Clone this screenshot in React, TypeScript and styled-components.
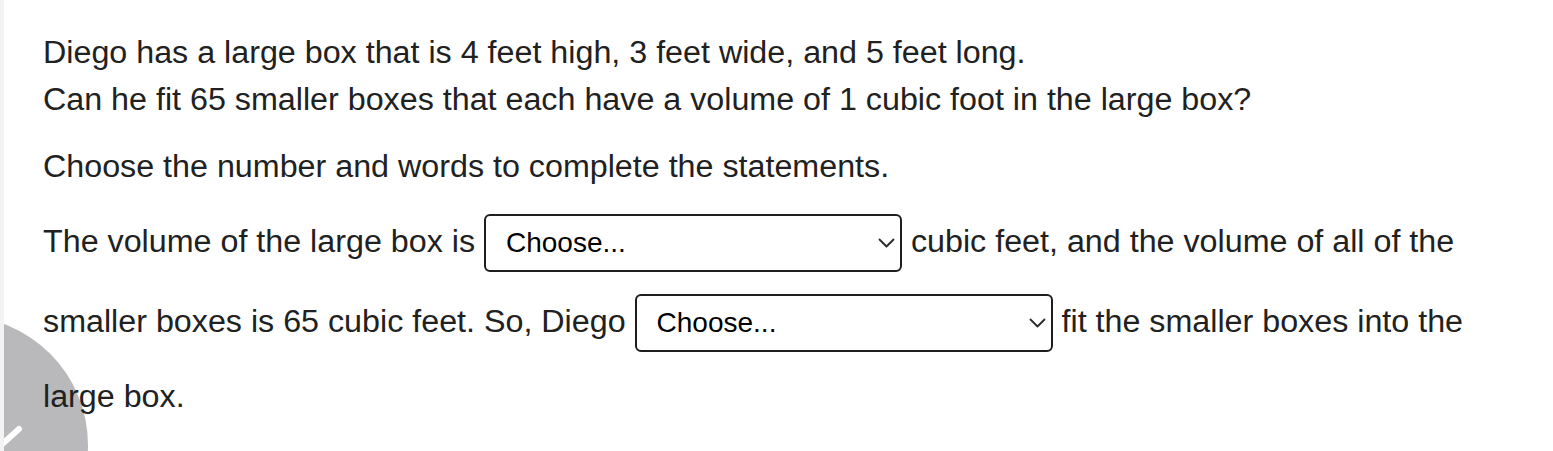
import React from "react";
import styled, { createGlobalStyle } from "styled-components";

const GlobalStyle = createGlobalStyle`
  html, body {
    margin: 0;
    padding: 0;
    background: #ffffff;
  }
  body {
    font-family: "Liberation Sans", Arial, Helvetica, sans-serif;
    color: #212121;
  }
`;

const Page = styled.div`
  position: relative;
  height: 451px;
  overflow: hidden;
  box-sizing: border-box;
  border-left: 4px solid #f3f3f3;
  background: #ffffff;
`;

const Content = styled.div`
  position: relative;
  z-index: 1;
  padding: 28.5px 40px 0 39px;
`;

const Para = styled.p<{ $gap?: number }>`
  margin: 0 0 ${(p) => p.$gap ?? 19}px;
  font-size: 32.25px;
  line-height: 47.5px;
  color: #212121;
`;

const SelectWrap = styled.span`
  position: relative;
  display: inline-block;
  margin: 1px 0 21px;
`;

const Select = styled.select`
  appearance: none;
  -webkit-appearance: none;
  box-sizing: border-box;
  width: 418px;
  height: 58px;
  padding: 11px 40px 11px 20px;
  border: 2px solid #1e1e1e;
  border-radius: 6px;
  background: #ffffff;
  color: #000000;
  font-family: "Liberation Sans", Arial, Helvetica, sans-serif;
  font-size: 28px;
  line-height: 32px;
  outline: none;
  cursor: pointer;
`;

const Chevron = styled.svg`
  position: absolute;
  right: 7px;
  top: 50%;
  width: 17px;
  height: 11px;
  transform: translateY(-50%);
  pointer-events: none;
`;

const Fab = styled.div`
  position: absolute;
  z-index: 0;
  left: -174px;
  top: 316px;
  width: 258px;
  height: 258px;
  border-radius: 50%;
  background: #b9b9bb;
`;

const FabIcon = styled.svg`
  position: absolute;
  left: 0;
  top: 0;
  width: 258px;
  height: 258px;
`;

const Dropdown: React.FC<{ options: string[] }> = ({ options }) => (
  <SelectWrap>
    <Select defaultValue="">
      <option value="">Choose...</option>
      {options.map((o) => (
        <option key={o} value={o}>
          {o}
        </option>
      ))}
    </Select>
    <Chevron viewBox="0 0 17 11" aria-hidden="true">
      <polyline
        points="1.5,2 8.5,9 15.5,2"
        fill="none"
        stroke="#2a2a2a"
        strokeWidth="1.8"
        strokeLinecap="round"
        strokeLinejoin="round"
      />
    </Chevron>
  </SelectWrap>
);

export default function App() {
  return (
    <>
      <GlobalStyle />
      <Page>
        <Content>
          <Para>
            Diego has a large box that is 4 feet high, 3 feet wide, and 5 feet long.
            <br />
            Can he fit 65 smaller boxes that each have a volume of 1 cubic foot in the large box?
          </Para>
          <Para $gap={22.5}>Choose the number and words to complete the statements.</Para>
          <Para $gap={0}>
            The volume of the large box is <Dropdown options={["12", "20", "60", "65"]} /> cubic
            feet, and the volume of all of the smaller boxes is 65 cubic feet. So, Diego{" "}
            <Dropdown options={["can", "cannot"]} /> fit the smaller boxes into the large box.
          </Para>
        </Content>
        <Fab>
          <FabIcon viewBox="0 0 258 258" aria-hidden="true">
            <line
              x1="160"
              y1="139"
              x2="189"
              y2="113"
              stroke="#ffffff"
              strokeWidth="6"
              strokeLinecap="round"
            />
          </FabIcon>
        </Fab>
      </Page>
    </>
  );
}
